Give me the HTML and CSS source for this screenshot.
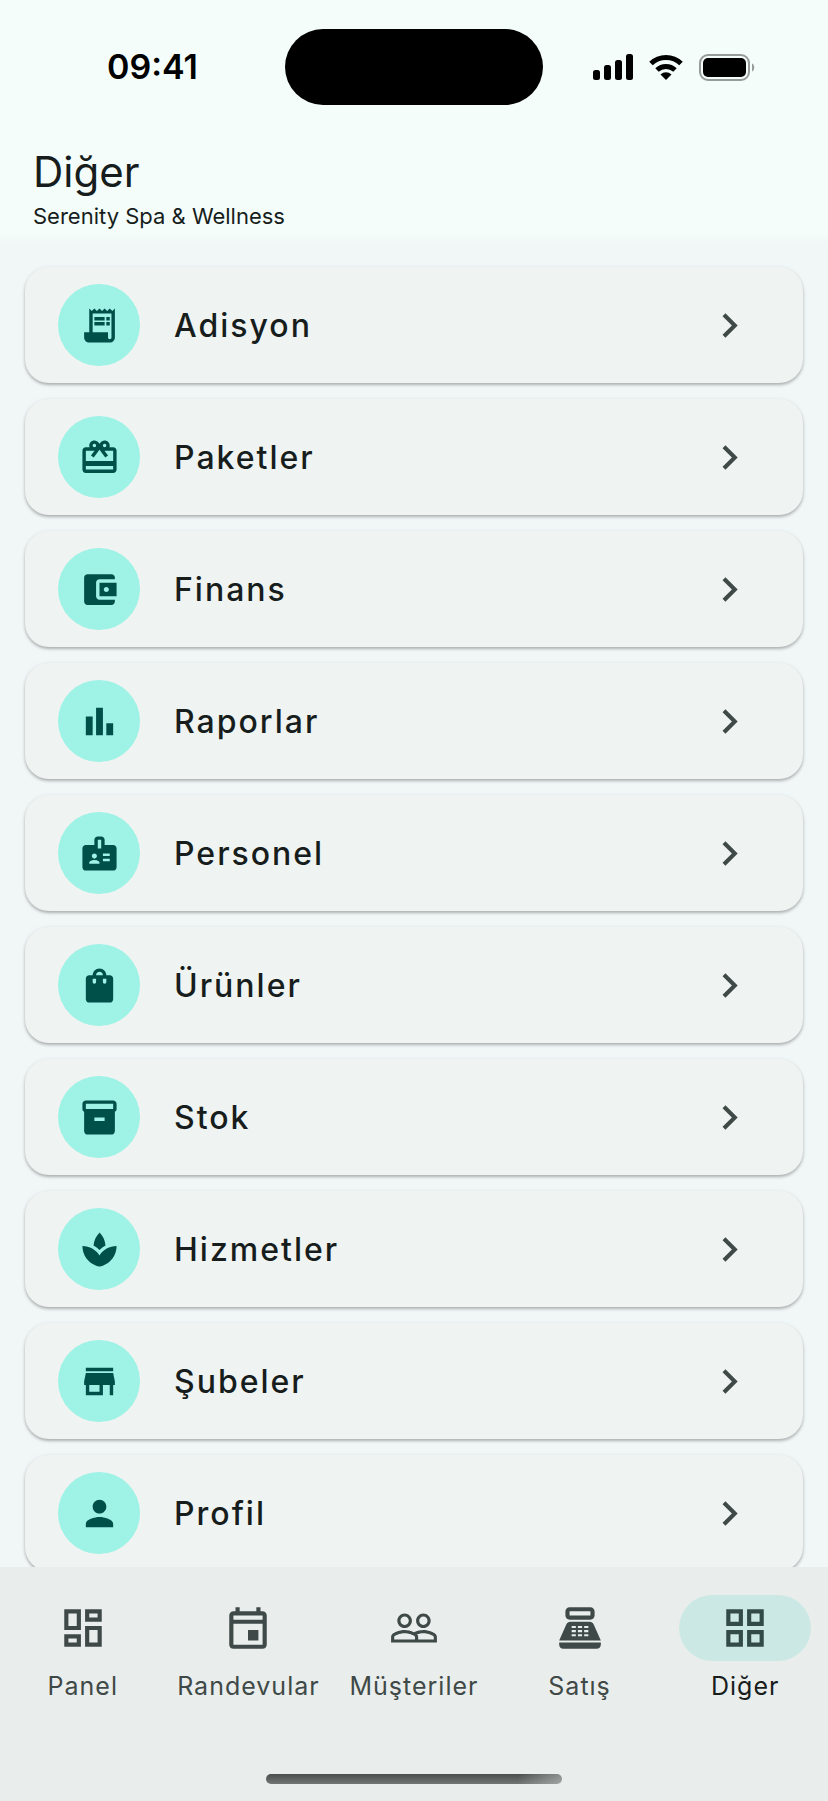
FILE: index.html
```html
<!DOCTYPE html>
<html lang="tr">
<head>
  <meta charset="UTF-8">
  <meta name="viewport" content="width=device-width, initial-scale=1.0">
  <title>Diğer</title>
  <link rel="stylesheet" href="styles.css">
</head>
<body>

  <!-- Status bar -->
  <div class="status-bar">
    <div class="status-time">09:41</div>
    <div class="island"></div>
    <div class="status-icons">
      <svg class="signal" viewBox="0 0 40 26" aria-hidden="true">
        <rect x="0" y="16" width="7" height="10" rx="2.5"/>
        <rect x="11" y="11" width="7" height="15" rx="2.5"/>
        <rect x="22" y="6" width="7" height="20" rx="2.5"/>
        <rect x="33" y="0" width="7" height="26" rx="2.5"/>
      </svg>
      <svg class="wifi" viewBox="0 0 34 26" aria-hidden="true">
        <path d="M2 9.500a21.500 21.500 0 0 1 30 0" fill="none" stroke="#000" stroke-width="5"/>
        <path d="M8 16a13 13 0 0 1 18 0" fill="none" stroke="#000" stroke-width="5"/>
        <path d="M17 26l-5.500-5.500a8 8 0 0 1 11 0z"/>
      </svg>
      <svg class="battery" viewBox="0 0 56 27" aria-hidden="true">
        <rect x="1" y="1" width="49" height="25" rx="8" fill="none" stroke="#979c9a" stroke-width="2"/>
        <rect x="4" y="4" width="43" height="19" rx="5"/>
        <path d="M53 9.500c3 1 3 7 0 8z" fill="#979c9a"/>
      </svg>
    </div>
  </div>

  <!-- Page title -->
  <header class="page-header">
    <h1>Diğer</h1>
    <p>Serenity Spa &amp; Wellness</p>
  </header>

  <!-- Menu list -->
  <main class="menu-list">
    <a href="#adisyon" class="menu-item">
      <span class="menu-icon">
        <svg viewBox="0 0 24 24"><path d="M19.5 3.5 18 2l-1.5 1.5L15 2l-1.5 1.5L12 2l-1.5 1.5L9 2 7.5 3.5 6 2v14H3v3c0 1.66 1.34 3 3 3h12c1.66 0 3-1.34 3-3V2l-1.5 1.5zM19 19c0 .55-.45 1-1 1s-1-.45-1-1v-3H8V5h11v14zM9 7h6v2H9zM16 7h2v2h-2zM9 10h6v2H9zM16 10h2v2h-2z"/></svg>
      </span>
      <span class="menu-label">Adisyon</span>
      <svg class="chevron" viewBox="0 0 24 24"><path d="M10 6 8.59 7.41 13.17 12l-4.58 4.59L10 18l6-6z"/></svg>
    </a>
    <a href="#paketler" class="menu-item">
      <span class="menu-icon">
        <svg viewBox="0 0 24 24"><path d="M20 6h-2.18c.11-.31.18-.65.18-1 0-1.66-1.34-3-3-3-1.05 0-1.96.54-2.5 1.35l-.5.67-.5-.68C10.96 2.54 10.05 2 9 2 7.34 2 6 3.34 6 5c0 .35.07.69.18 1H4c-1.11 0-1.99.89-1.99 2L2 19c0 1.11.89 2 2 2h16c1.11 0 2-.89 2-2V8c0-1.11-.89-2-2-2zm-5-2c.55 0 1 .45 1 1s-.45 1-1 1-1-.45-1-1 .45-1 1-1zM9 4c.55 0 1 .45 1 1s-.45 1-1 1-1-.45-1-1 .45-1 1-1zm11 15H4v-2h16v2zm0-5H4V8h5.08L7 10.83 8.62 12 11 8.76l1-1.36 1 1.36L15.38 12 17 10.83 14.92 8H20v6z"/></svg>
      </span>
      <span class="menu-label">Paketler</span>
      <svg class="chevron" viewBox="0 0 24 24"><path d="M10 6 8.59 7.41 13.17 12l-4.58 4.59L10 18l6-6z"/></svg>
    </a>
    <a href="#finans" class="menu-item">
      <span class="menu-icon">
        <svg viewBox="0 0 24 24"><path d="M21 18v1c0 1.1-.9 2-2 2H5c-1.11 0-2-.9-2-2V5c0-1.1.89-2 2-2h14c1.1 0 2 .9 2 2v1h-9c-1.11 0-2 .9-2 2v8c0 1.1.89 2 2 2h9zm-9-2h10V8H12v8zm4-2.5c-.83 0-1.5-.67-1.5-1.5s.67-1.5 1.5-1.5 1.5.67 1.5 1.5-.67 1.5-1.5 1.5z"/></svg>
      </span>
      <span class="menu-label">Finans</span>
      <svg class="chevron" viewBox="0 0 24 24"><path d="M10 6 8.59 7.41 13.17 12l-4.58 4.59L10 18l6-6z"/></svg>
    </a>
    <a href="#raporlar" class="menu-item">
      <span class="menu-icon">
        <svg viewBox="0 0 24 24"><path d="M4 9h4v11H4zm12 4h4v7h-4zm-6-9h4v16h-4z"/></svg>
      </span>
      <span class="menu-label">Raporlar</span>
      <svg class="chevron" viewBox="0 0 24 24"><path d="M10 6 8.59 7.41 13.17 12l-4.58 4.59L10 18l6-6z"/></svg>
    </a>
    <a href="#personel" class="menu-item">
      <span class="menu-icon">
        <svg viewBox="0 0 24 24"><path d="M20 7h-5V4c0-1.1-.9-2-2-2h-2c-1.1 0-2 .9-2 2v3H4c-1.1 0-2 .9-2 2v11c0 1.1.9 2 2 2h16c1.1 0 2-.9 2-2V9c0-1.1-.9-2-2-2zM9 12c.83 0 1.5.67 1.5 1.5S9.83 15 9 15s-1.5-.67-1.5-1.5S8.17 12 9 12zm3 6H6v-.75c0-1 2-1.5 3-1.5s3 .5 3 1.5V18zm1-9h-2V4h2v5zm5 7.5h-4V15h4v1.5zm0-3h-4V12h4v1.5z"/></svg>
      </span>
      <span class="menu-label">Personel</span>
      <svg class="chevron" viewBox="0 0 24 24"><path d="M10 6 8.59 7.41 13.17 12l-4.58 4.59L10 18l6-6z"/></svg>
    </a>
    <a href="#urunler" class="menu-item">
      <span class="menu-icon">
        <svg viewBox="0 0 24 24"><path d="M18 6h-2c0-2.21-1.79-4-4-4S8 3.79 8 6H6c-1.1 0-2 .9-2 2v12c0 1.1.9 2 2 2h12c1.1 0 2-.9 2-2V8c0-1.1-.9-2-2-2zm-8 4c0 .55-.45 1-1 1s-1-.45-1-1V8h2v2zm2-6c1.1 0 2 .9 2 2h-4c0-1.1.9-2 2-2zm4 6c0 .55-.45 1-1 1s-1-.45-1-1V8h2v2z"/></svg>
      </span>
      <span class="menu-label">Ürünler</span>
      <svg class="chevron" viewBox="0 0 24 24"><path d="M10 6 8.59 7.41 13.17 12l-4.58 4.59L10 18l6-6z"/></svg>
    </a>
    <a href="#stok" class="menu-item">
      <span class="menu-icon">
        <svg viewBox="0 0 24 24"><path d="M20 2H4c-1 0-2 .9-2 2v3.01c0 .72.43 1.34 1 1.69V20c0 1.1 1.1 2 2 2h14c.9 0 2-.9 2-2V8.7c.57-.35 1-.97 1-1.69V4c0-1.1-1-2-2-2zm-5 12H9v-2h6v2zm5-7H4V4h16v3z"/></svg>
      </span>
      <span class="menu-label">Stok</span>
      <svg class="chevron" viewBox="0 0 24 24"><path d="M10 6 8.59 7.41 13.17 12l-4.58 4.59L10 18l6-6z"/></svg>
    </a>
    <a href="#hizmetler" class="menu-item">
      <span class="menu-icon">
        <svg viewBox="0 0 24 24"><path d="M15.49 9.63c-.18-2.79-1.31-5.51-3.43-7.63-2.14 2.14-3.32 4.86-3.55 7.63 1.28.68 2.46 1.56 3.49 2.63 1.03-1.06 2.21-1.94 3.49-2.63zM12 15.45C9.85 12.17 6.18 10 2 10c0 5.32 3.36 9.82 8.03 11.49.63.23 1.29.4 1.97.51.68-.12 1.33-.29 1.97-.51C18.64 19.82 22 15.32 22 10c-4.18 0-7.85 2.17-10 5.45z"/></svg>
      </span>
      <span class="menu-label">Hizmetler</span>
      <svg class="chevron" viewBox="0 0 24 24"><path d="M10 6 8.59 7.41 13.17 12l-4.58 4.59L10 18l6-6z"/></svg>
    </a>
    <a href="#subeler" class="menu-item">
      <span class="menu-icon">
        <svg viewBox="0 0 24 24"><path d="M20 4H4v2h16V4zm1 10v-2l-1-5H4l-1 5v2h1v6h10v-6h4v6h2v-6h1zm-9 4H6v-4h6v4z"/></svg>
      </span>
      <span class="menu-label">Şubeler</span>
      <svg class="chevron" viewBox="0 0 24 24"><path d="M10 6 8.59 7.41 13.17 12l-4.58 4.59L10 18l6-6z"/></svg>
    </a>
    <a href="#profil" class="menu-item">
      <span class="menu-icon">
        <svg viewBox="0 0 24 24"><path d="M12 12c2.21 0 4-1.79 4-4s-1.79-4-4-4-4 1.79-4 4 1.79 4 4 4zm0 2c-2.67 0-8 1.34-8 4v2h16v-2c0-2.66-5.33-4-8-4z"/></svg>
      </span>
      <span class="menu-label">Profil</span>
      <svg class="chevron" viewBox="0 0 24 24"><path d="M10 6 8.59 7.41 13.17 12l-4.58 4.59L10 18l6-6z"/></svg>
    </a>
  </main>

  <!-- Bottom navigation -->
  <footer class="bottom-bar">
    <nav class="tabs">
      <a href="#panel" class="tab">
        <span class="tab-icon">
          <svg viewBox="0 0 24 24"><path d="M19 5v2h-4V5h4M9 5v6H5V5h4m10 8v6h-4v-6h4M9 17v2H5v-2h4M21 3h-8v6h8V3zM11 3H3v10h8V3zm10 8h-8v10h8V11zm-10 4H3v6h8v-6z"/></svg>
        </span>
        <span class="tab-label">Panel</span>
      </a>
      <a href="#randevular" class="tab">
        <span class="tab-icon">
          <svg viewBox="0 0 24 24"><path d="M19 4h-1V2h-2v2H8V2H6v2H5c-1.11 0-1.99.9-1.99 2L3 20c0 1.1.89 2 2 2h14c1.1 0 2-.9 2-2V6c0-1.1-.9-2-2-2zm0 16H5V10h14v10zm0-12H5V6h14v2zM12 13h5v5h-5z"/></svg>
        </span>
        <span class="tab-label">Randevular</span>
      </a>
      <a href="#musteriler" class="tab">
        <span class="tab-icon">
          <svg viewBox="0 0 24 24"><path d="M16.5 13c-1.2 0-3.07.34-4.5 1-1.43-.67-3.3-1-4.5-1C5.33 13 1 14.08 1 16.25V19h22v-2.75c0-2.17-4.33-3.25-6.5-3.25zm-4 4.5h-10v-1.25c0-.54 2.56-1.75 5-1.75s5 1.21 5 1.75v1.25zm9 0H14v-1.25c0-.46-.2-.86-.52-1.22.88-.3 1.96-.53 3.02-.53 2.44 0 5 1.21 5 1.75v1.25zM7.5 12c1.93 0 3.5-1.57 3.5-3.5S9.43 5 7.5 5 4 6.57 4 8.5 5.57 12 7.5 12zm0-5.5c1.1 0 2 .9 2 2s-.9 2-2 2-2-.9-2-2 .9-2 2-2zm9 5.5c1.93 0 3.5-1.57 3.5-3.5S18.43 5 16.5 5 13 6.57 13 8.5s1.57 3.5 3.5 3.5zm0-5.5c1.1 0 2 .9 2 2s-.9 2-2 2-2-.9-2-2 .9-2 2-2z"/></svg>
        </span>
        <span class="tab-label">Müşteriler</span>
      </a>
      <a href="#satis" class="tab">
        <span class="tab-icon">
          <svg viewBox="0 0 24 24"><path fill-rule="evenodd" d="M17 2H7c-1.1 0-2 .9-2 2v2c0 1.1.9 2 2 2h10c1.1 0 2-.9 2-2V4c0-1.1-.9-2-2-2zm0 4H7V4h10v2zm3 16H4c-1.1 0-2-.9-2-2v-1h20v1c0 1.1-.9 2-2 2zm-1.47-11.81C18.21 9.47 17.49 9 16.7 9H7.3c-.79 0-1.51.47-1.83 1.19L2 18h20l-3.47-7.81zM8 11h2v1H8zM11 11h2v1h-2zM14 11h2v1h-2zM8 13h2v1H8zM11 13h2v1h-2zM14 13h2v1h-2zM8 15h2v1H8zM11 15h2v1h-2zM14 15h2v1h-2z"/></svg>
        </span>
        <span class="tab-label">Satış</span>
      </a>
      <a href="#diger" class="tab active">
        <span class="tab-icon">
          <svg viewBox="0 0 24 24"><path d="M3 3v8h8V3H3zm6 6H5V5h4v4zm-6 4v8h8v-8H3zm6 6H5v-4h4v4zm4-16v8h8V3h-8zm6 6h-4V5h4v4zm-6 4v8h8v-8h-8zm6 6h-4v-4h4v4z"/></svg>
        </span>
        <span class="tab-label">Diğer</span>
      </a>
    </nav>
    <div class="home-indicator"></div>
  </footer>

</body>
</html>
```
FILE: styles.css
```css
* {
  margin: 0;
  padding: 0;
  box-sizing: border-box;
}

body {
  display: flex;
  flex-direction: column;
  height: 100vh;
  overflow: hidden;
  background-color: #f1f6f7;
  font-family: Inter, "Liberation Sans", sans-serif;
  color: #171d1c;
}

a {
  color: inherit;
  text-decoration: none;
}

/* Status bar */
.status-bar {
  display: grid;
  grid-template-columns: 1fr auto 1fr;
  align-items: center;
  padding: 29px 0 39px;
  background-color: #f4fdfa;
  color: #000;
}

.status-time {
  padding-left: 20px;
  text-align: center;
  font-size: 34px;
  line-height: 40px;
  font-weight: 600;
}

.island {
  width: 258px;
  height: 76px;
  border-radius: 38px;
  background-color: #000;
}

.status-icons {
  display: flex;
  align-items: center;
  justify-content: center;
  gap: 16px;
  padding-right: 24px;
}

.signal {
  width: 40px;
  height: 26px;
}

.wifi {
  width: 34px;
  height: 26px;
}

.battery {
  width: 56px;
  height: 27px;
}

/* Title block */
.page-header {
  padding: 0 33px 12px;
  background: linear-gradient(#f4fdfa 90%, #f1f6f7);
}

.page-header h1 {
  font-size: 42px;
  line-height: 56px;
  font-weight: 400;
}

.page-header p {
  font-size: 22px;
  line-height: 32px;
}

/* Menu cards */
.menu-list {
  flex: 1;
  min-height: 0;
  display: flex;
  flex-direction: column;
  gap: 16px;
  padding: 23px 25px;
  overflow-y: auto;
  scrollbar-width: none;
}

.menu-item {
  flex: none;
  display: flex;
  align-items: center;
  gap: 34px;
  padding: 17px 49px 17px 33px;
  border-radius: 24px;
  background-color: #eff4f2;
  box-shadow: 0 2px 3px rgba(0, 0, 0, 0.24), 0 1px 5px rgba(0, 0, 0, 0.08);
}

.menu-icon {
  display: flex;
  align-items: center;
  justify-content: center;
  width: 82px;
  height: 82px;
  border-radius: 50%;
  background-color: #9ef2e6;
}

.menu-icon svg {
  width: 41px;
  height: 41px;
  fill: #00504a;
}

.menu-label {
  flex: 1;
  padding-top: 2px;
  font-size: 32px;
  line-height: 48px;
  font-weight: 500;
  letter-spacing: 2px;
}

.chevron {
  width: 49px;
  height: 49px;
  fill: #3f4947;
}

/* Bottom navigation */
.bottom-bar {
  display: flex;
  flex-direction: column;
  align-items: center;
  gap: 71px;
  padding: 28px 0 17px;
  background-color: #e9eeec;
}

.tabs {
  display: flex;
  width: 100%;
}

.tab {
  flex: 1 1 0;
  min-width: 0;
  display: flex;
  flex-direction: column;
  align-items: center;
  gap: 8px;
  color: #3f4947;
}

.tab-icon {
  display: flex;
  align-items: center;
  justify-content: center;
  width: 132px;
  height: 66px;
  border-radius: 33px;
}

.tab-icon svg {
  width: 50px;
  height: 50px;
  fill: currentColor;
}

.tab-label {
  font-size: 25px;
  line-height: 34px;
  letter-spacing: 1px;
}

.tab.active .tab-icon {
  background-color: #cce8e4;
  color: #324b48;
}

.tab.active .tab-label {
  color: #171d1c;
}

.home-indicator {
  width: 296px;
  height: 10px;
  border-radius: 5px;
  background: linear-gradient(90deg, transparent 85%, rgba(233, 238, 236, 0.4)), linear-gradient(#4a4e4d, #727675);
}
```
